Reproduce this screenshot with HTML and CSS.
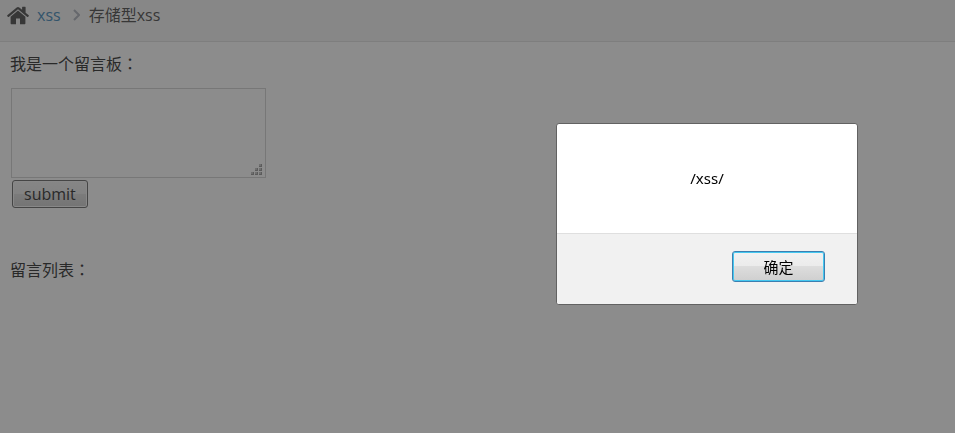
FILE: index.html
```html
<!DOCTYPE html>
<html lang="zh-CN">
<head>
  <meta charset="UTF-8" />
  <meta name="viewport" content="width=device-width, initial-scale=1.0" />
  <title>存储型xss</title>
  <link rel="stylesheet" href="styles.css">
</head>
<body>
  <nav class="breadcrumbs">
    <svg class="home-icon" width="22" height="19" viewBox="0 0 22 19" aria-hidden="true">
      <path d="M11 4.6 3.6 10.8V17.2c0 .6.4 1 1 1H9V12.6h4V18.200h4.400c.6 0 1-.4 1-1V10.800z" />
      <path d="M21.700 9.300 18.600 6.700V1.200c0-.3-.2-.5-.5-.5h-2.500c-.3 0-.5.2-.5.5V3.800L12.300 1.400c-.8-.7-1.800-.7-2.600 0L.3 9.300c-.2.200-.2.500-.1.700l.8.900c.2.200.5.200.7 0L11 3.200l9.300 7.700c.2.200.5.200.7 0l.8-.9c.2-.2.100-.5-.1-.7z" />
    </svg>
    <a href="#">xss</a>
    <svg class="arrow" width="7" height="12" viewBox="0 0 7 12" aria-hidden="true">
      <path d="M1 1l5 5-5 5" />
    </svg>
    <span>存储型xss</span>
  </nav>

  <main class="content">
    <form onsubmit="return false">
      <label class="title" for="message">我是一个留言板<span class="colon" lang="zh-TW">：</span></label>
      <div class="message-box">
        <textarea id="message" name="message"></textarea>
        <svg class="grip" width="11" height="11" viewBox="0 0 11 11" aria-hidden="true">
          <path d="M8 0h3v3H8zM4 4h3v3H4zM8 4h3v3H8zM0 8h3v3H0zM4 8h3v3H4zM8 8h3v3H8z" />
          <path class="grip-shade" d="M8 0h2v2H8zM4 4h2v2H4zM8 4h2v2H8zM0 8h2v2H0zM4 8h2v2H4zM8 8h2v2H8z" />
        </svg>
      </div>
      <button class="submit" type="submit">submit</button>
    </form>
    <p class="title list-title">留言列表<span class="colon" lang="zh-TW">：</span></p>
  </main>

  <div class="overlay" id="overlay">
    <div class="dialog" role="alertdialog" aria-modal="true" aria-labelledby="alertText">
      <div class="dialog-body" id="alertText">/xss/</div>
      <div class="dialog-footer">
        <button class="ok" type="button" onclick="document.getElementById('overlay').hidden = true">确定</button>
      </div>
    </div>
  </div>
</body>
</html>
```

FILE: styles.css
```css
* {
  box-sizing: border-box;
}

body {
  margin: 0;
  background-color: #fff;
  color: #393939;
  font-family: "Open Sans", "Noto Sans CJK SC", sans-serif;
  font-size: 16px;
  line-height: 24px;
}

.breadcrumbs {
  display: flex;
  align-items: center;
  padding: 3px 7px 14px;
  background-color: #f5f5f5;
  border-bottom: 1px solid #e2e2e2;
  color: #555;
}

.breadcrumbs a {
  margin: 0 12px 0 8px;
  color: #4c8fbd;
  text-decoration: none;
}

.home-icon {
  fill: #555;
}

.arrow {
  margin-right: 9px;
  fill: none;
  stroke: #b2b6bf;
  stroke-width: 2;
}

.content {
  padding: 10px;
}

.title {
  display: block;
  margin: 0;
}

/* the TC face centres the full-width colon in its cell */
.colon {
  font-family: "Noto Sans CJK TC", sans-serif;
  line-height: 1;
}

.message-box {
  position: relative;
  width: 255px;
  margin: 12px 1px 2px;
}

.message-box textarea {
  display: block;
  width: 100%;
  height: 90px;
  padding: 4px;
  background-color: #fff;
  border: 1px solid #d5d5d5;
  color: #696969;
  font: inherit;
  resize: none;
}

.grip {
  position: absolute;
  right: 4px;
  bottom: 3px;
  fill: #9c9c9c;
}

.grip-shade {
  fill: #c4c4c4;
}

.submit {
  display: block;
  height: 28px;
  margin-left: 2px;
  padding: 0 11px;
  background: linear-gradient(#f2f2f2, #ebebeb 50%, #dddddd 50%, #cfcfcf);
  border: 1px solid #707070;
  border-radius: 3px;
  box-shadow: inset 0 0 0 1px #f6f6f6;
  color: #393939;
  font: inherit;
}

.list-title {
  margin-top: 50px;
}

.overlay {
  position: fixed;
  inset: 0;
  display: flex;
  align-items: center;
  justify-content: flex-end;
  padding: 0 97px 5px 16px;
  background-color: rgba(26, 26, 26, 0.5);
}

.overlay[hidden] {
  display: none;
}

.dialog {
  width: 302px;
  overflow: hidden;
  background-color: #fff;
  border: 1px solid #626262;
  border-radius: 3px;
  color: #000;
  font-size: 15px;
}

.dialog-body {
  padding: 42px 16px 43px;
  font-family: "Noto Sans", "Open Sans", sans-serif;
  text-align: center;
}

.dialog-footer {
  display: flex;
  justify-content: flex-end;
  padding: 17px 32px 22px;
  background-color: #f1f1f1;
  border-top: 1px solid #dfdfdf;
}

.ok {
  width: 93px;
  height: 31px;
  padding: 0;
  background: linear-gradient(#f2f2f2, #ebebeb 50%, #dddddd 50%, #cfcfcf);
  border: 1px solid #3c7fb1;
  border-radius: 3px;
  box-shadow: inset 0 0 0 1px #45c8f0;
  color: #000;
  font: inherit;
}
```
